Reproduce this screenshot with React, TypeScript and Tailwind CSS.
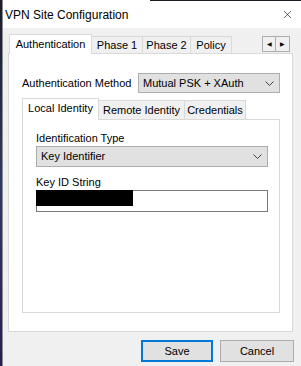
import { X } from "lucide-react";

const outerTabs = [
  { label: "Phase 1", w: "w-[51px]" },
  { label: "Phase 2", w: "w-[48px]" },
  { label: "Policy", w: "w-[41px]" },
];

const Dropdown = ({ value, className }: { value: string; className: string }) => (
  <div
    className={`flex items-center justify-between border border-[#adadad] bg-[#e1e1e1] pl-[4px] pr-[5px] ${className}`}
  >
    <span>{value}</span>
    <svg width="9" height="5" viewBox="0 0 9 5" className="text-[#444]">
      <polyline points="0.5,0.5 4.5,4.5 8.5,0.5" fill="none" stroke="currentColor" strokeWidth="1" />
    </svg>
  </div>
);

export default function App() {
  return (
    <div className="w-[301px] h-[366px] flex overflow-hidden font-['Liberation_Sans',Arial,sans-serif] text-[11px] text-black">
      <div className="w-[2px] bg-gradient-to-b from-[#1b1d2b] via-[#2c3a66] to-[#2b1b57]" />
      <div className="w-px bg-[#8c8c8c]" />
      <div className="flex-1 flex flex-col">
        {/* title bar */}
        <div className="flex h-px">
          <div className="w-[147px] bg-white" />
          <div className="flex-1 bg-[#1c1c24]" />
        </div>
        <div className="h-[27px] bg-white flex items-center justify-between pl-[2px] pr-[7px]">
          <span className="text-[12px]">VPN Site Configuration</span>
          <X className="w-[13px] h-[13px] text-black" strokeWidth={1.1} />
        </div>

        <div className="flex-1 bg-[#f0f0f0] pl-[5px] pr-[8px] pt-[6px] flex flex-col">
          {/* outer tabs */}
          <div className="flex items-end h-[20px] -mb-px">
            <div className="relative z-10 ml-px w-[83px] h-[20px] bg-white border border-b-0 border-[#d9d9d9] flex items-center justify-center">
              Authentication
            </div>
            {outerTabs.map((t) => (
              <div
                key={t.label}
                className={`${t.w} h-[18px] bg-[#f0f0f0] border border-l-0 border-b-0 border-[#d9d9d9] flex items-center justify-center pb-px`}
              >
                {t.label}
              </div>
            ))}
            <div className="ml-auto mr-[3px] self-start mt-[2px] flex">
              <div className="w-[14px] h-[16px] border border-[#adadad] bg-[#f0f0f0] flex items-center justify-center text-[6px]">
                ◀
              </div>
              <div className="w-[14px] h-[16px] border border-l-0 border-[#adadad] bg-[#f0f0f0] flex items-center justify-center text-[6px]">
                ▶
              </div>
            </div>
          </div>

          {/* outer panel */}
          <div className="h-[279px] border border-[#d9d9d9] bg-white pl-[13px] pt-[19px] flex flex-col">
            <div className="flex items-center h-[20px]">
              <span className="w-[116px]">Authentication Method</span>
              <Dropdown value="Mutual PSK + XAuth" className="w-[142px] h-[20px]" />
            </div>

            {/* inner tabs */}
            <div className="flex items-end h-[22px] mt-[5px] -mb-px">
              <div className="relative z-10 w-[77px] h-[22px] bg-white border border-b-0 border-[#d9d9d9] flex items-center justify-center pb-[2px]">
                Local Identity
              </div>
              <div className="w-[86px] h-[20px] bg-[#f0f0f0] border border-l-0 border-b-0 border-[#d9d9d9] flex items-center justify-center">
                Remote Identity
              </div>
              <div className="w-[61px] h-[20px] bg-[#f0f0f0] border border-l-0 border-b-0 border-[#d9d9d9] flex items-center justify-center">
                Credentials
              </div>
            </div>

            {/* inner panel */}
            <div className="w-[258px] h-[194px] border border-[#d9d9d9] bg-white pl-[13px] flex flex-col">
              <div className="h-[14px] leading-[14px] mt-[11px]">Identification Type</div>
              <Dropdown value="Key Identifier" className="w-[232px] h-[21px] mt-[1px]" />
              <div className="h-[14px] leading-[14px] mt-[8px]">Key ID String</div>
              <div className="w-[232px] h-[22px] mt-[1px] border border-[#7a7a7a] bg-white">
                <div className="w-[97px] h-[16px] -mt-px -ml-px bg-black" />
              </div>
            </div>
          </div>

          {/* buttons */}
          <div className="flex justify-end gap-[7px] mt-[8px] -mr-px">
            <button className="w-[72px] h-[22px] border-2 border-[#0078d7] bg-[#e1e1e1] text-[11px]">
              Save
            </button>
            <button className="w-[74px] h-[22px] border border-[#adadad] bg-[#e1e1e1] text-[11px]">
              Cancel
            </button>
          </div>
        </div>
      </div>
    </div>
  );
}
